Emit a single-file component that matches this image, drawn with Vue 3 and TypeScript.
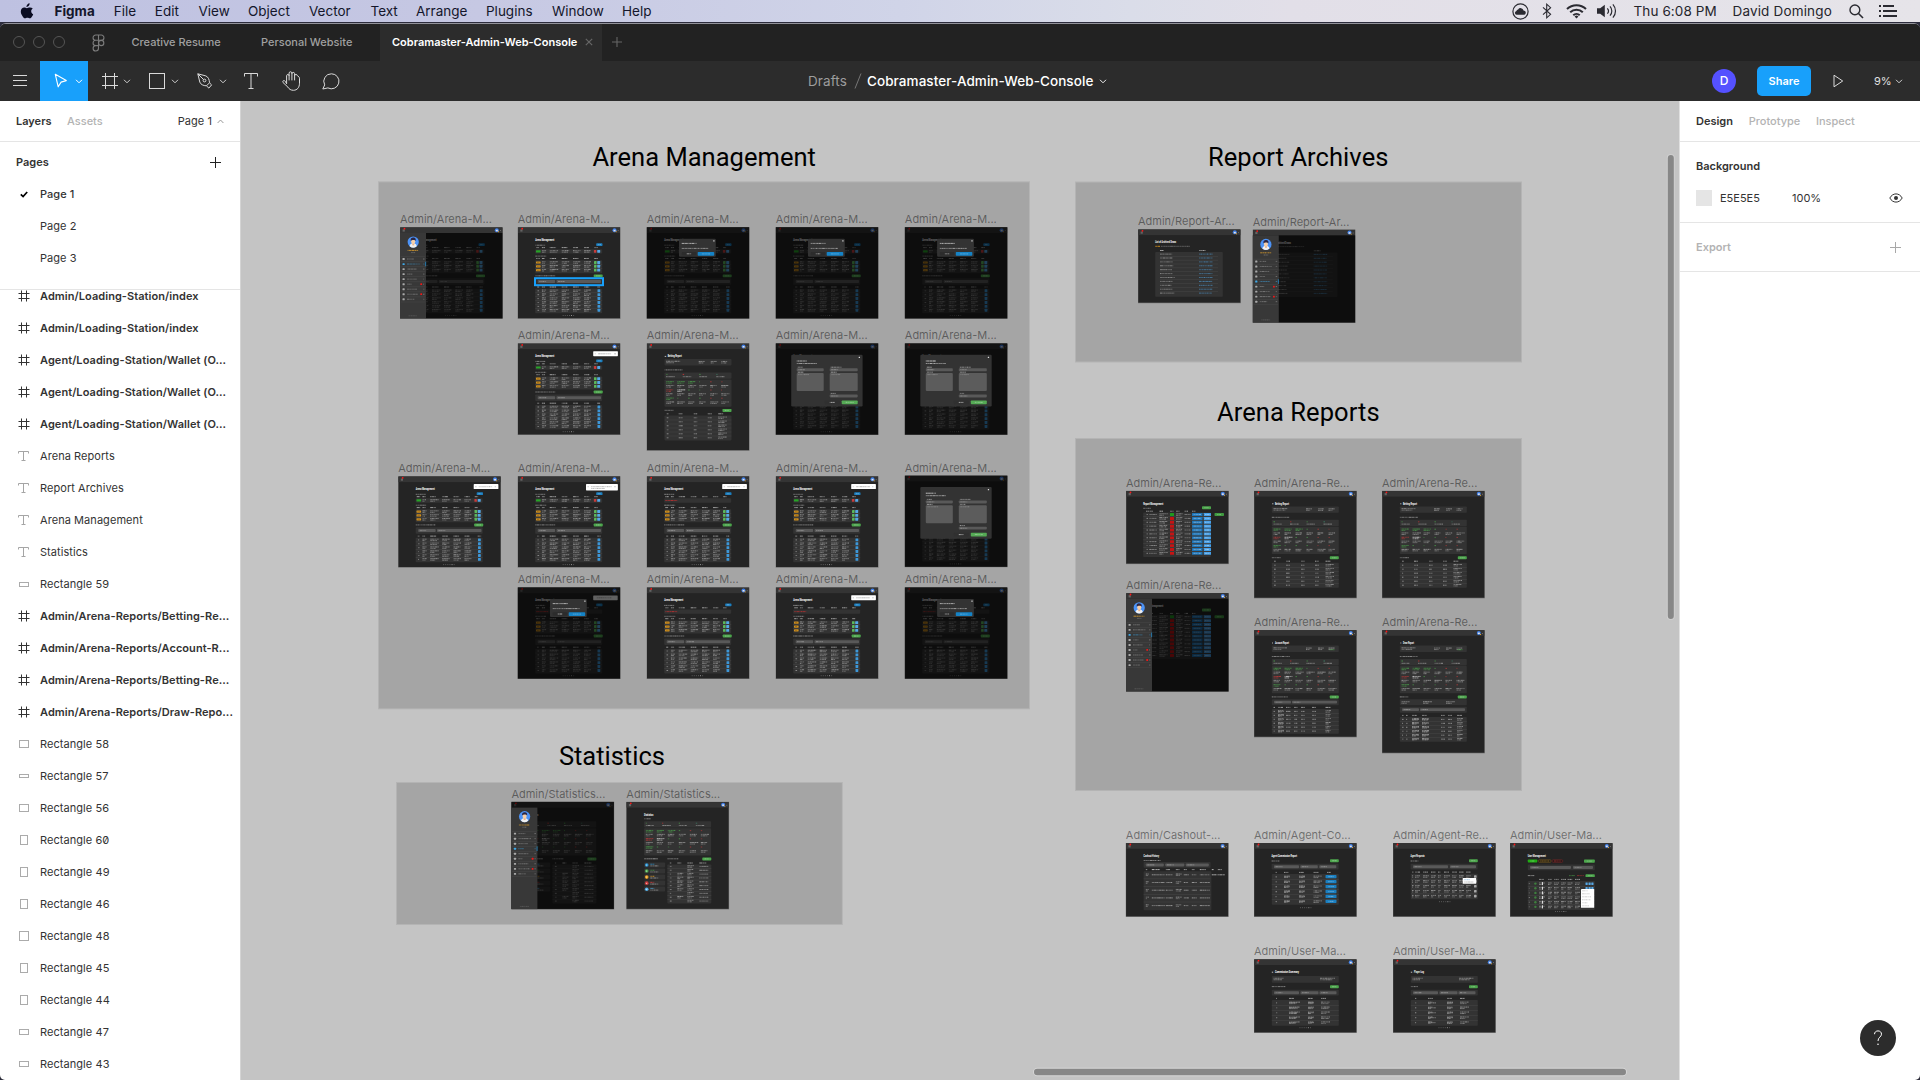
<script setup lang="ts">
interface Shape { x: number; y: number; w: number; h: number; c: string; r?: number; o?: number; s?: string }
interface Note { x: number; y: number; t: string; w: number }
interface Options {
  side?: number
  dim?: boolean
  dialog?: boolean
  form?: boolean
  empty?: boolean
  toast?: 'small' | 'large' | 'dim'
  selected?: boolean
  extra?: 'account' | 'draw'
  title?: string
}
interface Frame { x: number; y: number; h: number; label: string; ly: number; shapes: Shape[]; over: Shape[]; notes: Note[]; side?: number; selected?: boolean }

const WHITE = '#e8e8e8'
const GRAY = '#a9a9a9'
const PANEL = '#333333'
const FIELD = '#595959'
const GREEN = '#4ca64c'
const BLUE = '#1b7fc0'
const SKY = '#56a8e6'

let seed = 7
const rnd = () => {
  seed = (seed * 16807) % 2147483647
  return seed / 2147483647
}

/* A run of tiny word marks, as long as `w`. */
function words(out: Shape[], x: number, y: number, w: number, c = GRAY, o = 0.75) {
  let p = 0
  while (p < w - 0.4) {
    const len = Math.min(w - p, 0.8 + rnd() * 2.2)
    out.push({ x: x + p, y: y - 0.5, w: len, h: 1, c, o: o * (0.55 + rnd() * 0.45) })
    p += len + 0.3
  }
}
function box(out: Shape[], x: number, y: number, w: number, h: number, c: string, r = 0.8) {
  out.push({ x, y, w, h, c, r })
}
function button(out: Shape[], x: number, y: number, w: number, h: number, c: string) {
  box(out, x, y, w, h, c, 0.7)
  words(out, x + w * 0.25, y + h / 2, w * 0.5, '#ffffff', 0.35)
}
function cell(out: Shape[], x: number, y: number, w: number, c = GRAY, o = 0.8) {
  words(out, x, y - 0.75, w, c, o)
  words(out, x, y + 0.75, w * (0.5 + rnd() * 0.4), c, o * 0.85)
}
function field(out: Shape[], x: number, y: number, w: number, h = 3) {
  box(out, x, y, w, h, FIELD, 0.8)
  words(out, x + 1.5, y + h / 2, Math.min(7, w * 0.4), '#b5b5b5', 0.6)
}
function rule(out: Shape[], x: number, y: number, w: number) {
  out.push({ x, y, w, h: 0.4, c: '#4c4c4c' })
}
function pager(out: Shape[], x: number, y: number) {
  for (let i = 0; i < 6; i++) out.push({ x: x + i * 2.1, y: y - 0.5, w: 0.9, h: 1, c: '#9a9a9a', o: i === 4 ? 1 : 0.5 })
}

const mgmtCols: [number, number][] = [[24.2, 4.2], [32, 8.5], [44, 7.5], [55.3, 7.5], [66.3, 7]]

function management(out: Shape[], notes: Note[], o: Options) {
  notes.push({ x: 17.5, y: 14, t: 'Arena Management', w: 19 })
  words(out, 17.5, 18, 10)
  button(out, 78.5, 16, 6.3, 2.8, BLUE)
  const head = (y: number) => {
    words(out, 18.5, y, 3.5, WHITE, 0.7)
    mgmtCols.forEach(([x, w]) => words(out, x, y, w * 0.75, WHITE, 0.65))
    words(out, 76.5, y, 3.5, WHITE, 0.6)
  }
  head(20.4)
  box(out, 17.5, 22, 67, 4.4, PANEL)
  if (o.empty) words(out, 18.5, 24.2, 12, '#c03030', 0.85)
  else {
    box(out, 18.3, 23, 4.6, 2.2, '#27a327', 0.5)
    mgmtCols.forEach(([x, w]) => cell(out, x, 24.2, w))
    box(out, 76.2, 22.7, 2.5, 2.8, '#c63b3b', 0.4)
    box(out, 79.5, 22.7, 3, 2.8, SKY, 0.4)
  }
  words(out, 17.5, 28.9, 11)
  head(31.3)
  box(out, 17.5, 33, 67, 13, PANEL)
  for (let i = 0; i < 3; i++) {
    const y = 35.3 + i * 3.85
    box(out, 18.3, y - 1.1, 4.6, 2.2, '#cf9020', 0.4)
    words(out, 19.3, y, 2.6, '#6b4a10', 0.5)
    mgmtCols.forEach(([x, w]) => cell(out, x, y, w))
    box(out, 76.3, y - 1.5, 2.6, 2.9, '#5cb85c', 0.4)
    box(out, 79.5, y - 1.5, 3, 2.9, SKY, 0.4)
    if (i < 2) rule(out, 17.5, y + 1.8, 67)
  }
  words(out, 17.5, 48.6, 20)
  button(out, 76, 47.2, 9, 2.9, GREEN)
  box(out, 17.5, 51, 67, 6.5, PANEL)
  field(out, 20, 52.8, 17.5)
  field(out, 38.8, 52.8, 44.5)
  words(out, 19.5, 59.8, 2, WHITE, 0.6)
  mgmtCols.forEach(([x, w]) => words(out, x, 59.8, w * 0.75, WHITE, 0.7))
  words(out, 79.5, 59.8, 3.5, WHITE, 0.6)
  box(out, 17.5, 61.5, 67, 24.5, PANEL)
  for (let i = 0; i < 6; i++) {
    const y = 63.6 + i * 3.9
    words(out, 19.8, y, 1.6)
    mgmtCols.forEach(([x, w]) => cell(out, x, y, w))
    box(out, 79.8, y - 1.5, 2.8, 2.9, '#3d97d8', 0.4)
    if (i < 5) rule(out, 17.5, y + 1.85, 67)
  }
  pager(out, 45, 88.3)
}

function summary(out: Shape[], top: number) {
  box(out, 17.8, top, 67, 6.4, PANEL)
  const marks = ['#4ca64c', '#d33', '#4ca64c', '#3f8f6f']
  ;[19.5, 36, 52.5, 69.5].forEach((x, i) => {
    words(out, x, top + 2, 1.4, marks[i], 0.9)
    words(out, x, top + 4.3, 8.5, GRAY, 0.75)
  })
  box(out, 17.8, top + 7, 67, 27.3, PANEL)
  const xs = [19.5, 30.5, 41.5, 52.5, 63.5, 74.5]
  for (let r = 0; r < 3; r++) {
    const y = top + 9.7 + r * 8.2
    const tone = r === 1 ? '#c33a3a' : '#4ca64c'
    xs.forEach((x, i) => {
      if (i === 0 || (r === 0 && i < 3)) cell(out, x, y + 0.3, 7.5, tone, 0.85)
      else if (r === 1 && i === 1) cell(out, x, y + 0.3, 8, WHITE, 0.8)
      else words(out, x, y - 0.3, 1.4, i > 3 ? '#c33a3a' : '#4ca64c', 0.8)
      cell(out, x, y + 4.2, 6 + rnd() * 2.5, GRAY, 0.8)
    })
  }
}

function tableRows(out: Shape[], top: number, n: number, cols: [number, number][], step = 3.95, double = false) {
  cols.forEach(([x, w]) => words(out, x, top - 1.6, Math.min(w, 5), WHITE, 0.65))
  box(out, 17.8, top, 67, n * step + 1, PANEL)
  for (let i = 0; i < n; i++) {
    const y = top + step / 2 + 0.4 + i * step
    cols.forEach(([x, w], k) => (double || k === cols.length - 1 ? cell(out, x, y, w) : words(out, x, y, w, GRAY, 0.8)))
    if (i < n - 1) rule(out, 17.8, y + step / 2, 67)
  }
}

function report(out: Shape[], notes: Note[], o: Options) {
  const title = o.title ?? 'Betting Report'
  words(out, 18, 13, 1.5, WHITE, 0.9)
  notes.push({ x: 21, y: 14, t: title, w: title.length })
  box(out, 17.8, 15.6, 67, 6.4, PANEL)
  cell(out, 19.5, 18.6, 14)
  cell(out, 52, 18.8, 6)
  cell(out, 64, 18.8, 6)
  cell(out, 74.5, 18.8, 6)
  if (o.extra) words(out, 75.5, 19.7, 5, GREEN, 0.8)
  words(out, 17.8, 26.5, 18)
  summary(out, 29)
  words(out, 17.8, 66.9, o.extra === 'account' ? 16 : 9)
  button(out, 75.8, 65.5, 9, 3, GREEN)
  if (o.extra === 'account') {
    box(out, 17.8, 69.3, 67, 5.9, PANEL)
    field(out, 20, 70.8, 17, 2.8)
    field(out, 38, 70.8, 45, 2.8)
    tableRows(out, 79, 6, [[19.5, 1.5], [24, 6], [32, 4.5], [40, 3.5], [47, 4], [58, 4], [71.5, 5.5]], 3.95)
    for (let i = 0; i < 6; i++) cell(out, 24, 81.4 + i * 3.95, 6)
  } else if (o.extra === 'draw') {
    box(out, 17.8, 69.3, 67, 6, PANEL)
    cell(out, 19.5, 72.5, 8)
    cell(out, 41, 72.5, 9)
    cell(out, 64, 72.5, 9)
    box(out, 17.8, 76.8, 67, 5.9, PANEL)
    field(out, 20, 78.2, 17, 2.8)
    field(out, 38, 78.2, 45, 2.8)
    tableRows(out, 87, 6, [[20, 1.6], [24, 1.6], [30, 7], [40, 7], [59, 4], [66, 4], [75, 6]], 3.95)
    for (let i = 0; i < 6; i++) {
      cell(out, 30, 89.4 + i * 3.95, 7)
      cell(out, 40, 89.4 + i * 3.95, 7)
    }
  } else {
    tableRows(out, 72, 6, [[20, 1.8], [32, 4], [47, 3.5], [61, 4], [71.5, 8.5]], 4)
  }
}

function statistics(out: Shape[], notes: Note[]) {
  notes.push({ x: 17.8, y: 14, t: 'Statistics', w: 9.2 })
  words(out, 17.8, 17, 6.5)
  summary(out, 19.4)
  words(out, 17.8, 57, 14, WHITE, 0.7)
  words(out, 41, 57, 11)
  button(out, 76, 55.6, 9, 3, GREEN)
  const dots = ['#2b93d1', '#4ca64c', '#eca11f', '#d23b3b', '#56b3ea']
  dots.forEach((c, i) => {
    const y = 60.6 + i * 6.05
    box(out, 17.8, y, 21, 5, PANEL)
    box(out, 18.6, y + 0.8, 3.6, 3.6, c, 1.8)
    box(out, 19.9, y + 2.1, 1, 1, '#ffffff', 0.5)
    words(out, 24, y + 1.8, 4, c, 0.85)
    words(out, 24, y + 3.5, 8)
  })
  words(out, 43.5, 61.2, 1.5, WHITE, 0.6)
  ;[[51, 4], [61, 5.5], [73, 7]].forEach(([x, w]) => words(out, x, 61.2, w, WHITE, 0.7))
  box(out, 41, 62.6, 44, 39, PANEL)
  for (let i = 0; i < 10; i++) {
    const y = 64.6 + i * 3.85
    words(out, 43.5, y, 1.8)
    if (i > 1 && i !== 7 && i !== 9) cell(out, 51, y, 6)
    cell(out, 61, y, 6.5)
    words(out, 73, y, 9)
    if (i < 9) rule(out, 41, y + 1.9, 44)
  }
}

function archives(out: Shape[], notes: Note[]) {
  notes.push({ x: 17.2, y: 14, t: 'List of Archived Draws', w: 21 })
  words(out, 17.2, 17, 5, '#d9951a', 0.9)
  words(out, 23, 17, 29, GRAY, 0.6)
  words(out, 22, 21.2, 3.5, WHITE, 0.8)
  words(out, 61, 21.2, 7, WHITE, 0.7)
  box(out, 17.2, 22.8, 67.6, 44.6, PANEL)
  for (let i = 0; i < 11; i++) {
    const y = 24.8 + i * 3.9
    words(out, 22, y, 11 + rnd() * 4)
    words(out, 61, y, 13.5, '#4d8fc0', 0.8)
    if (i < 10) rule(out, 22, y + 1.9, 58)
  }
}

function reportIndex(out: Shape[], notes: Note[]) {
  notes.push({ x: 17.2, y: 14, t: 'Report Management', w: 20 })
  words(out, 17.2, 17.5, 7.5)
  button(out, 76, 15.4, 9, 3, GREEN)
  ;[20, 23.5, 33.5, 44, 50, 58.5, 66].forEach((x) => words(out, x, 20.4, 3.5, WHITE, 0.7))
  box(out, 17.2, 21.8, 67.6, 44.4, PANEL)
  for (let i = 0; i < 11; i++) {
    const y = 23.7 + i * 3.88
    words(out, 20.5, y, 1.5)
    words(out, 23.3, y, 7.5)
    cell(out, 33.3, y, 8.5)
    box(out, 44, y - 1.4, 4, 2.9, i ? '#c41414' : '#1f9a1f', 0.2)
    cell(out, 50, y, 6.5)
    words(out, 58.5, y, 6)
    box(out, 66, y - 1.4, 10.5, 2.9, '#1f76b8', 0.2)
    words(out, 67.5, y, 7.5, '#cfe7ff', 0.5)
    box(out, 77.8, y - 1.4, 7.2, 2.9, '#459fe8', 0.2)
    words(out, 79, y, 4.5, '#e8f4ff', 0.5)
    if (!i) button(out, 88.5, y - 1.4, 9.5, 2.9, '#3f9a3f')
    if (i < 10) rule(out, 17.2, y + 1.9, 67.6)
  }
}

function cashout(out: Shape[], notes: Note[]) {
  notes.push({ x: 17.8, y: 14, t: 'Cashout History', w: 15.5 })
  words(out, 17.8, 17.5, 17)
  box(out, 17.8, 19, 67, 5.8, PANEL)
  field(out, 20, 20.4, 18)
  field(out, 39.5, 20.4, 19)
  field(out, 60, 20.4, 23)
  const cols = [[20, 3], [26, 13], [40, 7], [50, 6], [58, 5], [66, 5], [74, 10]]
  ;[...cols, [86, 3], [92, 7]].forEach(([x, w]) => words(out, x, 26.6, w * 0.6, WHITE, 0.8))
  box(out, 17.8, 28.3, 67.8, 39, PANEL)
  for (let i = 0; i < 5; i++) {
    const y = 31.8 + i * 7.7
    cols.forEach(([x, w], k) => (k === 3 || k === 0 ? cell(out, x, y, w) : words(out, x, y, w, GRAY, 0.85)))
    if (!i) words(out, 86, y, 13, WHITE, 0.7)
    if (i < 4) rule(out, 17.8, y + 3.9, 67)
  }
}

function agents(out: Shape[], notes: Note[], commission: boolean) {
  notes.push({ x: 17.6, y: 14, t: commission ? 'Agent Commission Report' : 'Agent Requests', w: commission ? 25.5 : 14 })
  words(out, 17.6, 18, 8)
  button(out, 76, 16.2, 8.8, 3, GREEN)
  box(out, 17.6, 20.8, 67, 5.8, PANEL)
  if (commission) {
    field(out, 20, 22.2, 25)
    field(out, 46.3, 22.2, 17.5)
    field(out, 65.3, 22.2, 17)
    tableRows(out, 31, 6, [[21.5, 1.5], [30, 6], [45, 6], [59.5, 8.5]], 4.95, false)
    for (let i = 0; i < 6; i++) {
      cell(out, 30, 33.8 + i * 4.95, 6)
      cell(out, 45, 33.8 + i * 4.95, 6)
      button(out, 71.5, 32 + i * 4.95, 11, 3.3, BLUE)
    }
    words(out, 73, 29.4, 4, WHITE, 0.8)
    pager(out, 46, 64.7)
  } else {
    field(out, 20, 22.2, 35)
    field(out, 57, 22.2, 26)
    tableRows(out, 30.7, 5, [[19, 1.5], [22, 5], [30, 6], [38, 5], [45, 3], [51, 6], [59, 5], [66, 5], [73, 5]], 4.9, true)
    for (let i = 0; i < 5; i++) box(out, 81, 32.2 + i * 4.9, 2.6, 2.6, '#a8a8a8', 0.6)
    box(out, 69.7, 35, 13.5, 5.8, '#ffffff', 0.3)
    words(out, 71, 36.7, 6, '#6aa7d8', 0.6)
    words(out, 71, 39, 10, '#8a8a8a', 0.6)
    pager(out, 46, 58.7)
  }
}

function users(out: Shape[], notes: Note[]) {
  notes.push({ x: 17.8, y: 13.6, t: 'User Management', w: 18 })
  button(out, 17.8, 16.5, 9.5, 3, '#20ad13')
  out.push({ x: 28.5, y: 16.7, w: 12.5, h: 2.7, c: '#2b2517', r: 1, s: '#7a5a20' })
  words(out, 30, 18, 9, '#a1762b', 0.7)
  out.push({ x: 42.2, y: 16.7, w: 10.5, h: 2.7, c: '#2b1919', r: 1, s: '#7c2a2a' })
  words(out, 44, 18, 7, '#a33', 0.7)
  button(out, 74, 16.5, 10.8, 3.2, GREEN)
  box(out, 17.8, 21.6, 67, 5.6, PANEL)
  field(out, 20, 22.9, 41)
  field(out, 63, 22.9, 20)
  words(out, 17.8, 32.6, 6.5)
  words(out, 59, 32.6, 6, GREEN, 0.6)
  words(out, 67, 32.6, 7, '#a33', 0.7)
  button(out, 75.5, 31.2, 9.3, 2.9, GREEN)
  tableRows(out, 38, 6, [[29, 6], [38, 4], [44, 5], [51, 5], [57.5, 5], [65, 5]], 4.65, true)
  for (let i = 0; i < 6; i++) {
    const y = 40.6 + i * 4.65
    words(out, 18.8, y, 1)
    box(out, 24.2, y - 1.2, 2.4, 2.4, '#3e7f3e', 1.2)
    box(out, 32, y - 1.5, 1, 3, '#dddddd', 0)
    if (i < 2) [75.5, 78.5, 81.3].forEach((x) => box(out, x, y - 1.2, 2.2, 2.5, SKY, 0.3))
  }
  box(out, 71, 46, 13.2, 18.8, '#ffffff', 0.4)
  for (let i = 0; i < 6; i++) words(out, 72, 47.8 + i * 3, 4 + rnd() * 6, '#777777', 0.4)
  pager(out, 45, 68.5)
}

function userDetail(out: Shape[], notes: Note[], title: string) {
  const long = title.length > 10
  words(out, 17.8, 13, 1.4, WHITE, 0.9)
  notes.push({ x: 21, y: 14, t: title, w: long ? 24 : 10 })
  box(out, 17.8, 16.8, 67, 6.7, PANEL)
  cell(out, 19.5, 19.8, 10)
  cell(out, 66, 19.8, 15)
  words(out, 17.8, 27.4, long ? 14 : 7)
  button(out, 76, 26, 8.8, 3, GREEN)
  box(out, 17.8, 30.6, 67, 5.8, PANEL)
  field(out, 20, 32, 25)
  field(out, 46.5, 32, 18)
  field(out, 65.5, 32, 17)
  tableRows(out, 40.8, 5, [[22, 1.3], [35, 8], [54, 6], [67, 9]], 4.95, false)
  for (let i = 0; i < 5; i++) {
    cell(out, 35, 43.7 + i * 4.95, long ? 11 : 4.5)
    cell(out, 54, 43.7 + i * 4.95, 6)
  }
  pager(out, 45.5, 68.5)
}

type Kind = 'mgmt' | 'report' | 'stats' | 'archive' | 'index' | 'cashout' | 'commission' | 'requests' | 'users' | 'detail'

function frame(kind: Kind, x: number, y: number, h: number, label: string, ly: number, o: Options = {}): Frame {
  const shapes: Shape[] = []
  const over: Shape[] = []
  const notes: Note[] = []
  if (kind === 'mgmt') management(shapes, notes, o)
  if (kind === 'report') report(shapes, notes, o)
  if (kind === 'stats') statistics(shapes, notes)
  if (kind === 'archive') archives(shapes, notes)
  if (kind === 'index') reportIndex(shapes, notes)
  if (kind === 'cashout') cashout(shapes, notes)
  if (kind === 'commission') agents(shapes, notes, true)
  if (kind === 'requests') agents(shapes, notes, false)
  if (kind === 'users') users(shapes, notes)
  if (kind === 'detail') userDetail(shapes, notes, o.title ?? 'Player Log')

  const dark = o.dim || o.dialog || o.form
  if (o.toast === 'dim') {
    box(shapes, 75.5, 8, 24.5, 4.8, '#ffffff', 0.6)
    words(shapes, 79, 10.4, 15, '#888888', 0.7)
  }
  if (dark) over.push({ x: 0, y: 0, w: 102.5, h, c: '#000000', o: 0.62 })
  else if (o.side !== undefined) over.push({ x: 25.8, y: 5.8, w: 76.7, h: h - 5.8, c: '#000000', o: 0.64 })

  if (o.dialog) {
    box(over, 32.3, 11.6, 36.8, 18, '#333333', 1)
    words(over, 35, 16.2, 15, WHITE, 0.7)
    words(over, 35, 21.2, 27, WHITE, 0.6)
    box(over, 66.5, 13, 1.4, 1.4, '#cfcfcf', 0.3)
    over.push({ x: 35, y: 24.9, w: 14.5, h: 3.5, c: '#2c2c2c', r: 1 })
    words(over, 40, 26.6, 4.5, WHITE, 0.7)
    button(over, 51, 24.8, 16.5, 3.8, '#1583c6')
  }
  if (o.form) {
    box(over, 15.5, 11.3, 71.4, 51.8, '#333333', 1.2)
    words(over, 21, 17.6, 10, WHITE, 0.9)
    words(over, 21, 20.1, 20, WHITE, 0.7)
    box(over, 83, 13.4, 1.3, 1.3, '#e0e0e0', 0.3)
    words(over, 22, 23.8, 5, WHITE, 0.6)
    words(over, 55, 23.8, 11, WHITE, 0.6)
    field(over, 21, 24.8, 27)
    field(over, 54, 24.8, 28)
    words(over, 22, 28.8, 6, WHITE, 0.6)
    words(over, 55, 28.8, 6, WHITE, 0.6)
    box(over, 21, 29.6, 27, 18, '#5c5c5c', 1)
    box(over, 54, 29.6, 28, 18, '#5c5c5c', 1)
    words(over, 22.5, 31.2, 11, '#b0b0b0', 0.5)
    words(over, 55.5, 31.2, 9, '#b0b0b0', 0.5)
    words(over, 55, 50, 5, WHITE, 0.6)
    field(over, 54, 51.2, 28, 2.8)
    over.push({ x: 49, y: 57.2, w: 15, h: 3.6, c: '#303030', r: 1 })
    words(over, 54, 59, 5, WHITE, 0.7)
    button(over, 66, 57.1, 16, 3.7, '#55aa55')
  }
  if (o.toast === 'small' || o.toast === 'large') {
    const big = o.toast === 'large'
    const tx = big ? 68.3 : 75.5
    box(over, tx, 7.8, 100.2 - tx, big ? 6.3 : 5, '#ffffff', 0.6)
    words(over, tx + 1.5, 10.4, 1.3, '#999999', 0.6)
    words(over, tx + 5, 10.4, 100 - tx - 11, '#777777', 0.6)
    if (big) words(over, tx + 5, 12.2, 14, '#888888', 0.6)
    words(over, 96.5, 10.4, 1.8, '#888888', 0.6)
  }
  if (o.side !== undefined) {
    box(over, 0, 5.8, 26, h - 5.8, '#383838', 0)
    words(over, 7.5, 23.2, 11, '#e0a02c', 0.9)
    words(over, 11, 25.4, 4.5, GRAY, 0.5)
    for (let i = 0; i < 9; i++) {
      const iy = 31.8 + i * 5.03
      const on = i === o.side
      const c = on ? '#3fa9e8' : GRAY
      rule(over, 0.8, iy - 2.5, 24.4)
      box(over, 2.5, iy - 0.9, 2.2, 1.9, c, 0.5)
      words(over, 7, iy, [7, 12.5, 9.5, 5.5, 10, 4.5, 10, 11, 7.5][i], c, 0.55)
      words(over, 23, iy, 1.5, c, 0.5)
      if (on) over.push({ x: 25.2, y: iy - 2.3, w: 0.9, h: 4.6, c: '#247db3' })
      if (i === 5 || i === 7) box(over, 20.3, iy - 0.9, 1.8, 1.8, '#f01818', 0.5)
    }
    rule(over, 0.8, 74.6, 24.4)
    words(over, 8.5, h - 2.7, 9, GRAY, 0.3)
  }
  return { x, y, h, label, ly, shapes, over, notes, side: o.side, selected: o.selected }
}

const AM = 'Admin/Arena-M...'
const AR = 'Admin/Arena-Re...'
const c1 = 400, c2 = 517.7, c3 = 646.7, c4 = 775.7, c5 = 904.8
const frames: Frame[] = [
  frame('mgmt', c1, 227.2, 91.3, AM, 223, { side: 1 }),
  frame('mgmt', c2, 227.2, 91.3, AM, 223, { selected: true }),
  frame('mgmt', c3, 227.2, 91.3, AM, 223, { dialog: true }),
  frame('mgmt', c4, 227.2, 91.3, AM, 223, { dialog: true }),
  frame('mgmt', c5, 227.2, 91.3, AM, 223, { dialog: true }),
  frame('mgmt', c2, 343.4, 91.3, AM, 339, { toast: 'small' }),
  frame('report', c3, 343.4, 107, AM, 339),
  frame('mgmt', c4, 343.4, 91.3, AM, 339, { form: true }),
  frame('mgmt', c5, 343.4, 91.3, AM, 339, { form: true }),
  frame('mgmt', 398.2, 476.3, 91, AM, 472, { toast: 'small' }),
  frame('mgmt', c2, 476.3, 91, AM, 472, { toast: 'large' }),
  frame('mgmt', c3, 476.3, 91, AM, 472, { toast: 'small', empty: true }),
  frame('mgmt', c4, 476.3, 91, AM, 472, { toast: 'small' }),
  frame('mgmt', c5, 475.6, 91.3, AM, 472, { form: true }),
  frame('mgmt', c2, 587.4, 91.3, AM, 583, { dialog: true, toast: 'dim', empty: true }),
  frame('mgmt', c3, 587.4, 91.3, AM, 583, { empty: true }),
  frame('mgmt', c4, 587.4, 91.3, AM, 583, { toast: 'small', empty: true }),
  frame('mgmt', c5, 587.4, 91.3, AM, 583, { dialog: true, empty: true }),
  frame('stats', 511.4, 801.8, 107.3, 'Admin/Statistics...', 798, { side: 3, dim: true }),
  frame('stats', 626.3, 801.8, 107.3, 'Admin/Statistics...', 798),
  frame('archive', 1138, 229.3, 73.6, 'Admin/Report-Ar...', 225),
  frame('archive', 1252.7, 229.6, 93, 'Admin/Report-Ar...', 226, { side: 4 }),
  frame('index', 1126, 490.8, 73, AR, 487),
  frame('index', 1126, 593, 98.5, AR, 589, { side: 2 }),
  frame('report', 1254, 490.8, 107.2, AR, 487),
  frame('report', 1382, 490.8, 107.2, AR, 487),
  frame('report', 1254, 630, 107, AR, 626, { extra: 'account', title: 'Account Report' }),
  frame('report', 1382, 630, 123, AR, 626, { extra: 'draw', title: 'Draw Report' }),
  frame('cashout', 1125.8, 843, 73.6, 'Admin/Cashout-...', 839),
  frame('commission', 1254, 843, 73.6, 'Admin/Agent-Co...', 839),
  frame('requests', 1393, 843, 73.6, 'Admin/Agent-Re...', 839),
  frame('users', 1510, 843, 73.6, 'Admin/User-Ma...', 839),
  frame('detail', 1254, 959.2, 73.4, 'Admin/User-Ma...', 955, { title: 'Commission Summary' }),
  frame('detail', 1393, 959.2, 73.4, 'Admin/User-Ma...', 955, { title: 'Player Log' }),
]

const boards = [
  { x: 378, y: 181.3, w: 652, h: 528 },
  { x: 396, y: 782, w: 446.8, h: 143 },
  { x: 1075, y: 181.5, w: 447, h: 181 },
  { x: 1075, y: 438, w: 447, h: 353 },
]
const titles = [
  { t: 'Arena Management', x: 592.4, y: 165.8, w: 223.5 },
  { t: 'Statistics', x: 558.9, y: 764.8, w: 106 },
  { t: 'Report Archives', x: 1207.9, y: 165.8, w: 180.5 },
  { t: 'Arena Reports', x: 1217.1, y: 420.6, w: 162.5 },
]

const menus = [
  { t: 'Figma', w: 59.3 }, { t: 'File', w: 41 }, { t: 'Edit', w: 43.7 }, { t: 'View', w: 49.5 },
  { t: 'Object', w: 61 }, { t: 'Vector', w: 61.5 }, { t: 'Text', w: 45.5 }, { t: 'Arrange', w: 70 },
  { t: 'Plugins', w: 66 }, { t: 'Window', w: 70 }, { t: 'Help', w: 40 },
]

interface Layer { t: string; k: 'frame' | 'text' | 'rect'; w?: number; h?: number }
const layers: Layer[] = [
  { t: 'Admin/Loading-Station/index', k: 'frame' },
  { t: 'Admin/Loading-Station/index', k: 'frame' },
  { t: 'Agent/Loading-Station/Wallet (O...', k: 'frame' },
  { t: 'Agent/Loading-Station/Wallet (O...', k: 'frame' },
  { t: 'Agent/Loading-Station/Wallet (O...', k: 'frame' },
  { t: 'Arena Reports', k: 'text' },
  { t: 'Report Archives', k: 'text' },
  { t: 'Arena Management', k: 'text' },
  { t: 'Statistics', k: 'text' },
  { t: 'Rectangle 59', k: 'rect', w: 9, h: 4 },
  { t: 'Admin/Arena-Reports/Betting-Re...', k: 'frame' },
  { t: 'Admin/Arena-Reports/Account-R...', k: 'frame' },
  { t: 'Admin/Arena-Reports/Betting-Re...', k: 'frame' },
  { t: 'Admin/Arena-Reports/Draw-Repo...', k: 'frame' },
  { t: 'Rectangle 58', k: 'rect', w: 9, h: 7 },
  { t: 'Rectangle 57', k: 'rect', w: 9, h: 3 },
  { t: 'Rectangle 56', k: 'rect', w: 9, h: 7 },
  { t: 'Rectangle 60', k: 'rect', w: 7, h: 9 },
  { t: 'Rectangle 49', k: 'rect', w: 7, h: 9 },
  { t: 'Rectangle 46', k: 'rect', w: 7, h: 9 },
  { t: 'Rectangle 48', k: 'rect', w: 9, h: 9 },
  { t: 'Rectangle 45', k: 'rect', w: 7, h: 9 },
  { t: 'Rectangle 44', k: 'rect', w: 7, h: 9 },
  { t: 'Rectangle 47', k: 'rect', w: 9, h: 5 },
  { t: 'Rectangle 43', k: 'rect', w: 9, h: 5 },
]
</script>

<template>
  <div class="screen">
    <header class="menubar">
      <svg class="apple" width="14" height="16" viewBox="0 0 14 16"><path d="M9.600.3c.1 1-.3 1.900-.8 2.500-.6.7-1.400 1.200-2.300 1.100-.1-.9.3-1.900.9-2.500C8 .7 8.900.3 9.600.3zM12.800 5.600c-1 .6-1.600 1.500-1.600 2.700 0 1.400.8 2.400 2 2.900-.3.900-.7 1.600-1.200 2.300-.6.900-1.200 1.800-2.200 1.800-.9 0-1.300-.6-2.400-.6s-1.500.6-2.400.6c-1 0-1.700-.9-2.300-1.800C1.400 11.700.8 10.200.8 8.600c0-2.700 1.700-4.100 3.400-4.100 1.100 0 1.900.7 2.700.7.700 0 1.700-.7 3-.7 1.200 0 2.200.4 2.900 1.100z" fill="#0a0c22" /></svg>
      <span v-for="m in menus" :key="m.t" class="menu" :class="{ strong: m.t === 'Figma' }" :style="{ width: m.w + 'px' }">{{ m.t }}</span>
      <div class="status">
        <svg width="17" height="17" viewBox="0 0 17 17"><circle cx="8.500" cy="8.500" r="7.600" fill="none" stroke="#2a2a31" stroke-width="1.200" /><path d="M4.600 11.800a2 2 0 0 1-.2-3.900 2 2 0 0 1 1.700-1.500 3 3 0 0 1 5.400 1 2.300 2.300 0 0 1 .9 4.400z" fill="#2a2a31" /></svg>
        <svg class="bt" width="10" height="16" viewBox="0 0 10 16"><path d="M1 4.300l7.600 7-3.900 3.500V1.200l3.900 3.500-7.600 7" fill="none" stroke="#2a2a31" stroke-width="1.100" /></svg>
        <svg class="wifi" width="21" height="15" viewBox="0 0 21 15"><g fill="none" stroke="#2a2a31" stroke-width="2"><path d="M1 5a13.600 13.600 0 0 1 19 0" /><path d="M4.200 8.200a9 9 0 0 1 12.600 0" /><path d="M7.300 11.200a4.600 4.600 0 0 1 6.400 0" /></g><path d="M8.600 12.500a2.800 2.800 0 0 1 3.800 0l-1.900 2z" fill="#2a2a31" /></svg>
        <svg class="vol" width="21" height="16" viewBox="0 0 21 16"><path d="M0 5.200h3.200L7.800 1.800v12.400L3.200 10.800H0z" fill="#2a2a31" /><g fill="none" stroke="#2a2a31" stroke-width="1.200"><path d="M10.300 5.300a4 4 0 0 1 0 5.400" /><path d="M13 3.300a7 7 0 0 1 0 9.400" /><path d="M15.900 1.300a10 10 0 0 1 0 13.400" /></g></svg>
        <span class="clock">Thu 6:08 PM</span>
        <span class="who">David Domingo</span>
        <svg class="find" width="15" height="15" viewBox="0 0 15 15"><circle cx="5.900" cy="5.900" r="4.900" fill="none" stroke="#2a2a31" stroke-width="1.400" /><path d="M9.500 9.500l4.500 4.500" stroke="#2a2a31" stroke-width="1.600" /></svg>
        <svg class="list" width="18" height="12" viewBox="0 0 18 12"><path d="M0 1h2M0 6h2M0 11h2M4 1h11M4 6h14M4 11h14" stroke="#2a2a31" stroke-width="1.800" /></svg>
      </div>
    </header>

    <div class="window">
      <div class="tabs">
        <div class="lights"><i /><i /><i /></div>
        <svg class="logo" width="13" height="18" viewBox="0 0 13 18"><g fill="none" stroke="#7b7b7b" stroke-width="1.100"><path d="M6.500 1H3.700a2.600 2.600 0 0 0 0 5.300h2.800zM6.500 1h2.800a2.600 2.600 0 0 1 0 5.300H6.500zM6.500 6.300H3.700a2.600 2.600 0 0 0 0 5.300h2.800zM6.500 11.600H3.700a2.700 2.700 0 1 0 2.800 2.700z" /><circle cx="9.200" cy="9" r="2.650" /></g></svg>
        <div class="tab first">Creative Resume</div>
        <div class="tab second">Personal Website</div>
        <div class="tab current"><span>Cobramaster-Admin-Web-Console</span><svg width="8" height="8" viewBox="0 0 8 8"><path d="M.8.8l6.400 6.400M7.200.8L.8 7.200" stroke="#666" stroke-width="1.200" /></svg></div>
        <svg class="add" width="10" height="10" viewBox="0 0 10 10"><path d="M5 0v10M0 5h10" stroke="#666" stroke-width="1.100" /></svg>
      </div>

      <div class="toolbar">
        <div class="tool burger"><svg width="14" height="12" viewBox="0 0 14 12"><path d="M0 .5h14M0 5.500h14M0 10.500h14" stroke="#dadada" /></svg></div>
        <div class="tool move">
          <svg width="14" height="16" viewBox="0 0 14 16"><path d="M1.300 1.300l11 6.300-5.200 1.500-2.900 4.700z" fill="none" stroke="#fff" stroke-width="1.100" stroke-linejoin="round" /></svg>
          <svg class="chev" width="8" height="5" viewBox="0 0 8 5"><path d="M1 .8l3 3 3-3" fill="none" stroke="#fff" /></svg>
        </div>
        <div class="tool pair">
          <svg width="16" height="16" viewBox="0 0 16 16"><path d="M3.500 0v16M12.500 0v16M0 3.500h16M0 12.500h16" fill="none" stroke="#dadada" /></svg>
          <svg class="chev" width="8" height="5" viewBox="0 0 8 5"><path d="M1 .8l3 3 3-3" fill="none" stroke="#cfcfcf" /></svg>
        </div>
        <div class="tool pair">
          <svg width="16" height="16" viewBox="0 0 16 16"><rect x=".5" y=".5" width="15" height="15" fill="none" stroke="#dadada" /></svg>
          <svg class="chev" width="8" height="5" viewBox="0 0 8 5"><path d="M1 .8l3 3 3-3" fill="none" stroke="#cfcfcf" /></svg>
        </div>
        <div class="tool pair">
          <svg width="16" height="16" viewBox="0 0 16 16"><g fill="none" stroke="#dadada" stroke-linejoin="round"><path d="M.8.800l8 2.100c2.200.8 3.700 3.700 3.700 6.900l-3 3c-3.200 0-6-1.500-6.700-3.700z" /><path d="M.8.800l5.700 5.700" /><circle cx="7.500" cy="7.500" r="1.400" /><path d="M12.700 10l1.900 1.900-2.700 3.200-2.400-2.200" /></g></svg>
          <svg class="chev" width="8" height="5" viewBox="0 0 8 5"><path d="M1 .8l3 3 3-3" fill="none" stroke="#cfcfcf" /></svg>
        </div>
        <div class="tool type"><svg width="14" height="16" viewBox="0 0 14 16"><path d="M.5 3.500v-3h13v3M7 .5v15M4.500 15.500h5" fill="none" stroke="#dadada" /></svg></div>
        <div class="tool hand"><svg width="18" height="20" viewBox="0 0 18 20"><g fill="none" stroke="#dadada" stroke-linejoin="round" stroke-linecap="round"><path d="M4.600 12.400V4.700c0-1.600 2.500-1.600 2.500 0V2.100c0-1.800 2.800-1.800 2.800 0v.5c0-1.600 2.700-1.600 2.700 0v2c0-1.500 2.700-1.500 2.700 0l1.700 1.400c.3.300.5.700.5 1.200v5c0 4.300-2.400 7.100-6 7.100-2.800 0-4.400-1.200-5.600-3.200L1 11.500c-.9-1.600 1-2.700 2-1.500z" /><path d="M7.100 4.700V9M9.900 2.600V9M12.600 4.600V9" /></g></svg></div>
        <div class="tool talk"><svg width="18" height="17" viewBox="0 0 18 17"><path d="M9.500.8a7.500 7.500 0 1 1-3.600 14.100L.8 16l1.900-4.100A7.500 7.500 0 0 1 9.500.8z" fill="none" stroke="#dadada" stroke-linejoin="round" /></svg></div>

        <div class="crumbs"><span class="drafts">Drafts</span><svg width="8" height="16" viewBox="0 0 8 16"><path d="M7 .5L1 15.500" stroke="#777" /></svg><span class="file">Cobramaster-Admin-Web-Console</span><svg class="chev" width="8" height="5" viewBox="0 0 8 5"><path d="M1 .8l3 3 3-3" fill="none" stroke="#eee" /></svg></div>

        <div class="right">
          <span class="avatar">D</span>
          <span class="share">Share</span>
          <svg class="play" width="11" height="14" viewBox="0 0 11 14"><path d="M1 1.200l8.700 5.800L1 12.800z" fill="none" stroke="#dadada" stroke-linejoin="round" /></svg>
          <span class="zoom">9%</span>
          <svg class="chev" width="8" height="5" viewBox="0 0 8 5"><path d="M1 .8l3 3 3-3" fill="none" stroke="#cfcfcf" /></svg>
        </div>
      </div>

      <div class="body">
        <aside class="left">
          <div class="ltabs"><b>Layers</b><span class="mute">Assets</span><span class="pg">Page 1</span><svg width="7" height="5" viewBox="0 0 7 5"><path d="M.6 4l2.900-3 2.900 3" fill="none" stroke="#999" /></svg></div>
          <div class="pages">
            <div class="ph"><b>Pages</b><svg width="11" height="11" viewBox="0 0 11 11"><path d="M5.500 0v11M0 5.500h11" stroke="#222" /></svg></div>
            <div class="prow"><svg width="8" height="7" viewBox="0 0 8 7"><path d="M.8 3.300l2.300 2.300L7.200 1" fill="none" stroke="#000" stroke-width="1.700" /></svg><span class="on">Page 1</span></div>
            <div class="prow"><i /><span>Page 2</span></div>
            <div class="prow"><i /><span>Page 3</span></div>
          </div>
          <div class="layers">
            <div v-for="(l, i) in layers" :key="i" class="layer" :class="{ heavy: l.k === 'frame' }">
              <svg width="12" height="12" viewBox="0 0 12 12">
                <path v-if="l.k === 'frame'" d="M3.500.5v11M8.500.5v11M.5 3.500h11M.5 8.500h11" fill="none" stroke="#333" />
                <path v-else-if="l.k === 'text'" d="M.5 3.500v-2h10v2M5.500 1.500v9M3.500 10.500h4" fill="none" stroke="#a5a5a5" />
                <rect v-else :x="6 - Math.ceil(l.w! / 2) + 0.5" :y="6 - Math.ceil(l.h! / 2) + 0.5" :width="l.w" :height="l.h" fill="none" stroke="#ababab" />
              </svg>
              <span>{{ l.t }}</span>
            </div>
          </div>
        </aside>

        <main class="canvas">
          <svg width="1438" height="979" viewBox="241 101 1438 979">
            <g v-for="(b, i) in boards" :key="'b' + i">
              <rect :x="b.x" :y="b.y" :width="b.w" :height="b.h" fill="#b4b4b4" />
              <rect :x="b.x + 1" :y="b.y + 1" :width="b.w - 2" :height="b.h - 2" fill="#a5a5a5" />
            </g>
            <text v-for="t in titles" :key="t.t" class="heading" :x="t.x" :y="t.y" :textLength="t.w">{{ t.t }}</text>
            <g v-for="(f, i) in frames" :key="i" :transform="`translate(${f.x} ${f.y})`">
              <text class="flabel" x="0" :y="f.ly - f.y">{{ f.label }}</text>
              <rect x="0" y="0" width="102.800" :height="f.h + 0.3" fill="#6c6c6c" />
              <rect x=".3" y=".3" width="102" :height="f.h - 0.6" fill="#242424" />
              <rect x=".3" y=".3" width="102" height="5.500" fill="#343434" />
              <rect x="2.600" y="2.200" width="2.200" height="2.200" fill="#8a8a8a" opacity=".55" />
              <circle cx="4.500" cy="1.500" r=".9" fill="#ff1414" />
              <circle cx="96.800" cy="3" r="2" fill="#3f7fe8" />
              <rect x="95.900" y="2.600" width="1.900" height="1.500" fill="#e8e4e0" />
              <rect x="98" y="4" width="1" height="1" fill="#e0a02c" />
              <rect x="100" y="3" width="1" height=".8" fill="#777" />
              <rect v-for="(s, k) in f.shapes" :key="k" :x="s.x" :y="s.y" :width="s.w" :height="s.h" :rx="s.r" :fill="s.c" :opacity="s.o" :stroke="s.s" :stroke-width="s.s ? 0.5 : undefined" />
              <text v-for="n in f.notes" :key="n.t" class="note" :x="n.x" :y="n.y" :textLength="n.w" lengthAdjust="spacingAndGlyphs">{{ n.t }}</text>
              <rect v-for="(s, k) in f.over" :key="'o' + k" :x="s.x" :y="s.y" :width="s.w" :height="s.h" :rx="s.r" :fill="s.c" :opacity="s.o" />
              <g v-if="f.side !== undefined">
                <circle cx="13.200" cy="14.800" r="5.600" fill="#4c93f7" />
                <path d="M9.600 19a3.700 3.700 0 0 1 7.200 0 5.600 5.600 0 0 1-7.200 0z" fill="#f1f1f1" />
                <rect x="12.300" y="15.500" width="1.900" height="2.700" fill="#e9b48c" />
                <ellipse cx="13.200" cy="14.300" rx="2.100" ry="2.500" fill="#f6cfa8" />
                <path d="M10.700 13.800c-.4-2.700 1.200-3.600 2.800-3.400 1.900.1 2.600 1.500 2.200 3.400-.5-1.300-3.900-1.300-5 0z" fill="#2d2742" />
              </g>
              <rect v-if="f.selected" x="17.300" y="51" width="68" height="7" fill="none" stroke="#18a0fb" stroke-width="2" />
            </g>
            <rect x="1666.800" y="154" width="8" height="466" rx="4" fill="#cfcfcf" />
            <rect x="1667.800" y="155" width="6" height="464" rx="3" fill="#878787" />
            <rect x="1033" y="1067.800" width="594" height="8.400" rx="4.200" fill="#d6d6d6" />
            <rect x="1034" y="1068.800" width="592" height="6.400" rx="3.200" fill="#878787" />
          </svg>
        </main>

        <aside class="props">
          <div class="rtabs"><b>Design</b><span>Prototype</span><span>Inspect</span></div>
          <div class="bg">
            <b>Background</b>
            <div class="brow"><i /><span class="hex">E5E5E5</span><span class="pct">100%</span><svg width="14" height="10" viewBox="0 0 14 10"><path d="M.8 5C2.300 2.300 4.500.9 7 .9S11.700 2.300 13.200 5C11.700 7.700 9.500 9.100 7 9.100S2.300 7.700.8 5z" fill="none" stroke="#333" /><circle cx="7" cy="5" r="2" fill="#333" /></svg></div>
          </div>
          <div class="export"><b>Export</b><svg width="11" height="11" viewBox="0 0 11 11"><path d="M5.500 0v11M0 5.500h11" stroke="#a8a8a8" /></svg></div>
          <div class="help"><svg width="10" height="16" viewBox="0 0 10 16"><path d="M1.500 4.200C1.500 2.200 3 .9 5 .9s3.500 1.300 3.500 3.300c0 2.700-3.500 3-3.500 6.800" fill="none" stroke="#fff" /><circle cx="5" cy="14.300" r=".8" fill="#fff" /></svg></div>
        </aside>
      </div>
    </div>
  </div>
</template>

<style>
html,
body {
  margin: 0;
  background: #000;
}
</style>

<style scoped>
.screen {
  width: 1920px;
  height: 1080px;
  overflow: hidden;
  display: flex;
  flex-direction: column;
  background: #2c2c3c;
  font-family: Inter, "Noto Sans", sans-serif;
  font-size: 11px;
  color: #333;
}
svg {
  flex: none;
  display: block;
}
.menubar {
  height: 22px;
  flex: none;
  display: flex;
  align-items: center;
  padding-left: 20px;
  box-sizing: border-box;
  background: linear-gradient(90deg, #bec1e1 0, #c6c8e3 480px, #d0d4e8 900px, #dadde9 1130px, #e2dfe8 1290px, #e6e4e9 1920px);
  font-size: 13.5px;
  color: #14162b;
  white-space: nowrap;
}
.apple {
  margin-right: 20.5px;
}
.menu {
  flex: none;
}
.strong {
  font-weight: 700;
}
.status {
  margin-left: auto;
  width: 408px;
  display: flex;
  align-items: center;
  color: #25252c;
}
.bt { margin-left: 13px; }
.wifi { margin-left: 14px; }
.vol { margin-left: 10px; }
.clock { margin-left: 15.5px; width: 99px; letter-spacing: 0.1px; }
.who { width: 116.5px; letter-spacing: 0.16px; }
.list { margin-left: 15px; }
.window {
  flex: 1;
  min-height: 0;
  display: flex;
  flex-direction: column;
  margin-top: 1px;
  border-top: 1px solid #92929a;
  border-radius: 6px 6px 5px 5px;
  overflow: hidden;
  background: #222;
}
.tabs {
  height: 37px;
  flex: none;
  display: flex;
  align-items: center;
  background: #222;
  color: #a0a0a0;
  font-weight: 500;
}
.lights {
  display: flex;
  gap: 8px;
  margin-left: 13px;
  padding-bottom: 1px;
}
.lights i {
  width: 12px;
  height: 12px;
  box-sizing: border-box;
  border: 1px solid #555;
  border-radius: 50%;
}
.logo {
  margin-left: 26.5px;
}
.tab {
  white-space: nowrap;
  padding-bottom: 2px;
}
.first { width: 129.5px; margin-left: 27px; }
.second { width: 118.5px; }
.current {
  box-sizing: border-box;
  width: 222px;
  height: 37px;
  padding: 0 9px 2px 12.5px;
  display: flex;
  align-items: center;
  justify-content: space-between;
  background: #2c2c2c;
  color: #fff;
  font-weight: 600;
}
.add {
  margin: 0 0 1px 10px;
}
.toolbar {
  height: 40px;
  flex: none;
  display: flex;
  align-items: center;
  background: #2c2c2c;
  color: #fff;
}
.tool {
  height: 40px;
  display: flex;
  align-items: center;
  box-sizing: border-box;
}
.burger { width: 40px; padding-left: 13px; }
.move { width: 48px; padding-left: 14px; background: #18a0fb; gap: 7px; }
.pair { width: 48px; padding-left: 14px; gap: 5px; }
.pair + .pair { padding-left: 13px; gap: 6px; }
.type { width: 50px; padding-left: 12px; }
.hand { width: 40px; }
.talk { width: 40px; }
.crumbs {
  flex: 1;
  display: flex;
  align-items: center;
  padding-left: 446px;
  font-size: 13.5px;
  white-space: nowrap;
}
.drafts { color: #9d9d9d; width: 45.5px; letter-spacing: 0.1px; }
.file { width: 227px; margin-left: 5.5px; font-weight: 500; letter-spacing: 0.07px; }
.crumbs .chev { margin-left: 4.5px; }
.right {
  width: 208px;
  display: flex;
  align-items: center;
}
.avatar {
  width: 24px;
  height: 24px;
  border-radius: 50%;
  background: #5551ff;
  text-align: center;
  line-height: 24px;
  font-size: 12px;
  font-weight: 500;
}
.share {
  width: 54px;
  height: 30px;
  margin-left: 21px;
  border-radius: 5px;
  background: #18a0fb;
  text-align: center;
  line-height: 30px;
  font-weight: 600;
}
.play { margin-left: 21.5px; }
.zoom { margin-left: 30.5px; width: 21px; color: #e0e0e0; }
.body {
  flex: 1;
  min-height: 0;
  display: flex;
}
.left {
  width: 240px;
  flex: none;
  display: flex;
  flex-direction: column;
  background: #fff;
  border-right: 1px solid #d4d4d4;
}
b {
  font-weight: 600;
  color: #333;
}
.ltabs {
  height: 40px;
  flex: none;
  display: flex;
  align-items: center;
  padding-left: 16px;
  border-bottom: 1px solid #e5e5e5;
}
.mute {
  margin-left: 15.5px;
  color: #b3b3b3;
  font-weight: 500;
}
.pg {
  margin-left: auto;
  letter-spacing: 0.05px;
}
.ltabs svg {
  margin: 0 16.5px 0 4.5px;
}
.pages {
  height: 147px;
  flex: none;
  border-bottom: 1px solid #e5e5e5;
}
.ph {
  height: 36px;
  padding: 4px 19px 0 16px;
  box-sizing: border-box;
  display: flex;
  align-items: center;
  justify-content: space-between;
}
.prow {
  height: 32px;
  display: flex;
  align-items: center;
  padding-left: 20px;
  letter-spacing: 0.05px;
}
.prow i { width: 8px; }
.prow span { margin-left: 12px; }
.prow .on { font-weight: 500; }
.layers {
  flex: 1;
  min-height: 0;
  overflow: hidden;
}
.layer {
  height: 32px;
  display: flex;
  align-items: center;
  padding-left: 18px;
  white-space: nowrap;
  letter-spacing: 0.06px;
}
.layer:first-child {
  margin-top: -10px;
}
.layer span { margin-left: 10px; font-feature-settings: "zero"; }
.heavy { font-weight: 600; }
.canvas {
  flex: 1;
  min-width: 0;
  background: #c4c4c4;
  overflow: hidden;
}
.heading {
  font-family: Roboto, sans-serif;
  font-size: 25.5px;
  fill: #000;
}
.flabel {
  font-size: 11px;
  fill: #000;
  fill-opacity: 0.45;
}
.note {
  font-family: Roboto, sans-serif;
  font-size: 2.7px;
  font-weight: 700;
  fill: #fff;
}
.props {
  width: 240px;
  flex: none;
  display: flex;
  flex-direction: column;
  background: #fff;
  border-left: 1px solid #e0e0e0;
}
.rtabs {
  height: 40px;
  flex: none;
  display: flex;
  align-items: center;
  gap: 15.7px;
  padding-left: 16px;
  border-bottom: 1px solid #e5e5e5;
  color: #b3b3b3;
  font-weight: 500;
}
.bg {
  height: 80px;
  flex: none;
  padding-left: 16px;
  border-bottom: 1px solid #e5e5e5;
}
.bg b {
  display: block;
  height: 40px;
  line-height: 49px;
}
.brow {
  height: 32px;
  display: flex;
  align-items: center;
}
.brow i {
  width: 16px;
  height: 16px;
  background: #e5e5e5;
}
.hex { margin-left: 8px; width: 72px; }
.pct { width: 97px; }
.export {
  height: 48px;
  flex: none;
  display: flex;
  align-items: center;
  justify-content: space-between;
  padding: 0 19px 0 16px;
  border-bottom: 1px solid #e5e5e5;
}
.export b { color: #b3b3b3; }
.help {
  width: 36px;
  height: 36px;
  margin: auto 24px 24px auto;
  border-radius: 50%;
  background: #2c2c2c;
  display: flex;
  align-items: center;
  justify-content: center;
}
</style>
